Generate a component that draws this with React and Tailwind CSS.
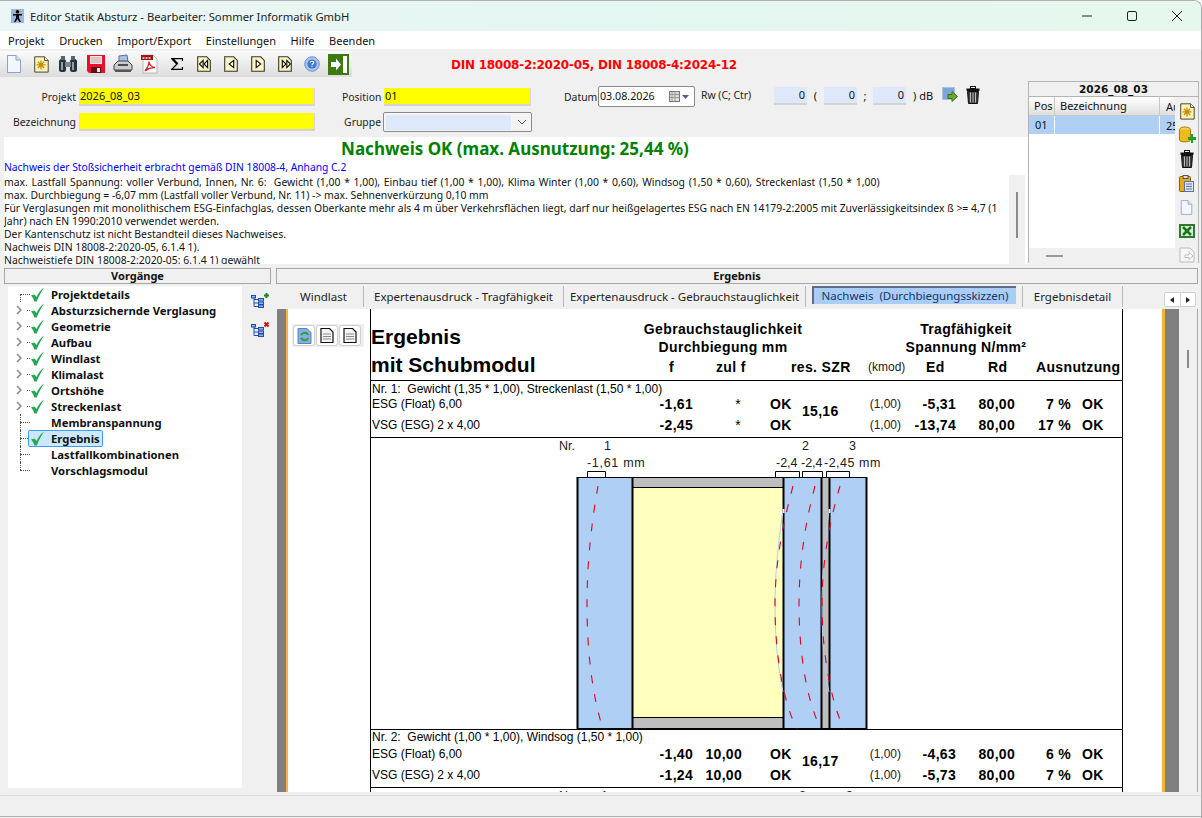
import React from "react";

const Svg = ({ w = 20, h = 20, vb, children, className = "" }) => (
  <svg width={w} height={h} viewBox={vb || `0 0 ${w} ${h}`} className={"shrink-0 " + className}>{children}</svg>
);

const DocIcon = ({ w = 16, h = 20 }) => (
  <Svg w={w} h={h} vb="0 0 16 20">
    <path d="M1.500 1.500H10L14.500 6V18.500H1.500Z" fill="#f3f6fd" stroke="#8f9fc8" />
    <path d="M10 1.500V6H14.500" fill="#dbe3f6" stroke="#8f9fc8" />
  </Svg>
);
const NewIcon = () => (
  <Svg w={18} h={18} vb="0 0 20 20">
    <path d="M3 2H14L18 6V19H3Z" fill="#fbf3bb" stroke="#3a3a1a" />
    <path d="M14 2V6H18" fill="#fff" stroke="#3a3a1a" />
    <path d="M10 6V16M5 11H15M6.500 7.500L13.500 14.500M13.500 7.500L6.500 14.500" stroke="#c88a00" strokeWidth="1.400" />
  </Svg>
);
const Binoc = () => (
  <Svg w={20} h={20}>
    <rect x="1" y="5" width="7" height="13" rx="2.500" fill="#26323c" />
    <rect x="12" y="5" width="7" height="13" rx="2.500" fill="#26323c" />
    <rect x="3" y="2" width="4" height="4" fill="#566470" />
    <rect x="13" y="2" width="4" height="4" fill="#566470" />
    <rect x="7" y="8" width="6" height="5" fill="#7a8792" />
    <rect x="3" y="8" width="2" height="8" fill="#8fa0ad" />
    <rect x="14" y="8" width="2" height="8" fill="#8fa0ad" />
  </Svg>
);
const Floppy = () => (
  <Svg w={18} h={18}>
    <path d="M0 0H18V18H2L0 16Z" fill="#e8102a" />
    <rect x="3" y="1" width="12" height="8" fill="#f4e6e6" />
    <path d="M4 3H14M4 5H14M4 7H14" stroke="#c9a0a0" />
    <rect x="4" y="12" width="10" height="6" fill="#60101a" />
    <rect x="10" y="13" width="3" height="4" fill="#e8e8e8" />
  </Svg>
);
const Printer = () => (
  <Svg w={20} h={20}>
    <path d="M6 2L14 1L15 8H6Z" fill="#a9c4ea" stroke="#57708f" />
    <path d="M1 11L5 7H15L19 11V16H1Z" fill="#c8ccd0" stroke="#444" />
    <path d="M2 16H18V18H2Z" fill="#555" />
    <path d="M5 11H15" stroke="#222" strokeWidth="1.500" />
  </Svg>
);
const Pdf = () => (
  <Svg w={17} h={20}>
    <path d="M2 1H12L16 5V19H2Z" fill="#fff" stroke="#b8b8b8" />
    <rect x="0" y="1" width="12" height="5" fill="#a31515" />
    <path d="M1.500 4H10.500" stroke="#f2dada" strokeDasharray="2 1" strokeWidth="1.500" />
    <path d="M4 17C7 13 8 10 8 7.500C8.500 11 10 13 14 13.500C10 13.500 7 14.500 4 17Z" fill="none" stroke="#e02020" strokeWidth="1.300" />
  </Svg>
);
const Sigma = () => (
  <Svg w={12} h={12}>
    <path d="M11.500 3V0.700H0.800L6 6L0.800 11.300H11.500V9" fill="none" stroke="#000" strokeWidth="1.200" />
    <path d="M1.500 0.700L6.500 6" stroke="#000" strokeWidth="2" />
  </Svg>
);
const Page = ({ kind }) => {
  const tri = {
    first: ["M8 6L4 10L8 14Z", "M13 6L9 10L13 14Z"],
    prev: ["M12 6L7 10L12 14Z"],
    next: ["M7 6L12 10L7 14Z"],
    last: ["M6 6L10 10L6 14Z", "M11 6L15 10L11 14Z"],
  }[kind];
  return (
    <Svg w={18} h={18} vb="0 0 18 20">
      <path d="M2 2H12L16 6V18H2Z" fill="#fbf5c0" stroke="#333" strokeWidth="1.200" />
      {tri.map((d, i) => (
        <path key={i} d={d} fill="#fff" stroke="#111" strokeWidth="1.300" />
      ))}
    </Svg>
  );
};
const Help = () => (
  <Svg w={16} h={16}>
    <circle cx="8" cy="8" r="7.300" fill="#a8c4ee" stroke="#6d94d4" />
    <circle cx="8" cy="8" r="4.600" fill="#3f78cf" />
    <path d="M6.300 6.500C6.500 4.800 9.800 4.800 9.800 6.600C9.800 7.800 8 7.800 8 9.200M8 10.200V11" stroke="#fff" fill="none" strokeWidth="1.200" />
  </Svg>
);
const ExitIcon = () => (
  <Svg w={21} h={21}>
    <rect width="21" height="21" fill="#3d7a12" />
    <rect x="15" y="2" width="4" height="17" fill="#fff" />
    <path d="M3 8H8V4.500L13 10.500L8 16.500V13H3Z" fill="#fff" />
  </Svg>
);
const Trash = ({ className = "" }) => (
  <Svg w={14} h={18} className={className}>
    <rect x="4.500" y="0.500" width="5" height="2" fill="none" stroke="#111" />
    <rect x="0.500" y="2.500" width="13" height="2.500" fill="#111" />
    <path d="M1.500 5.500H12.500L11.500 17.500H2.500Z" fill="#3a3a3a" stroke="#111" />
    <path d="M4.500 6.500V16.500M7 6.500V16.500M9.500 6.500V16.500" stroke="#bbb" />
  </Svg>
);
const GoIcon = () => (
  <Svg w={16} h={16}>
    <rect x="0.500" y="0.500" width="12" height="12" fill="#7ba6dc" stroke="#a7c0e2" />
    <path d="M6 7.500H10V4.500L15.500 9.500L10 14.500V11.500H6Z" fill="#6aa72f" stroke="#3e7214" />
  </Svg>
);

const Check = () => (
  <Svg w={15} h={15}>
    <path d="M1 8.500L4.500 7.500L6.500 10C8 6.500 10.500 3 14 0.500C11.500 4.500 8.500 9.500 6.800 14.500L4.500 14.500C3.800 12 2.500 10 1 8.500Z" fill="#22a84f" />
  </Svg>
);

const TreeIcon = ({ add }) => (
  <Svg w={18} h={16}>
    <g fill="#8fb4ea" stroke="#1f4fae">
      <rect x="0.500" y="3.500" width="4" height="2.500" />
      <rect x="7.500" y="6.500" width="5" height="2.500" />
      <rect x="7.500" y="10" width="5" height="2.500" />
      <rect x="7.500" y="13" width="5" height="2.500" />
    </g>
    <path d="M3 6V14.500H7.500M3 7.500H7.500M3 11H7.500" stroke="#1f4fae" fill="none" />
    {add ? (
      <path d="M13 3.500H18M15.500 1V6" stroke="#198a22" strokeWidth="2" />
    ) : (
      <path d="M13.500 1.500L17.500 5.500M17.500 1.500L13.500 5.500" stroke="#c41616" strokeWidth="2" />
    )}
  </Svg>
);

const treeItems = [
  ["Projektdetails", "first", true],
  ["Absturzsichernde Verglasung", "exp", true],
  ["Geometrie", "exp", true],
  ["Aufbau", "exp", true],
  ["Windlast", "exp", true],
  ["Klimalast", "exp", true],
  ["Ortshöhe", "exp", true],
  ["Streckenlast", "exp", true],
  ["Membranspannung", "line", false],
  ["Ergebnis", "line", true, true],
  ["Lastfallkombinationen", "line", false],
  ["Vorschlagsmodul", "last", false],
];

const TreeRow = ({ label, kind, check, sel }) => (
  <div className="h-4 flex items-center pl-[8px]">
    <div className="w-[12px] h-4 shrink-0 flex items-center">
      {kind === "exp" ? (
        <svg width="6" height="10"><path d="M1 1L5 5L1 9" fill="none" stroke="#8a8a8a" strokeWidth="1.500" /></svg>
      ) : (
        <div className={"ml-[4px] border-l border-dotted border-[#555] " + (kind === "first" ? "h-2 mt-2" : kind === "last" ? "h-2 mb-2" : "h-4")} />
      )}
    </div>
    <div className={"border-t border-dotted border-[#555] shrink-0 -mr-[1px] " + (kind === "exp" ? "w-[3px] -ml-[1px]" : "w-[10px] -ml-[8px]")} />
    <div className={"flex items-center h-[15px] rounded-[1px] pr-[2px] " + (sel ? "bg-[#cce8ff] outline outline-[#3f9cf0]" : "")}>
      <div className="w-[22px] shrink-0 pl-[1px]">{check && <Check />}</div>
      <span className="text-[11.300px] font-bold text-[#111]">{label}</span>
    </div>
  </div>
);

const Field = ({ label, lw, w, value, ml = "ml-[3px]" }) => (
  <div className="flex items-center h-5">
    <span className="text-right text-[#222] text-[10.400px]" style={{ width: lw }}>{label}</span>
    <div className={`${ml} h-[18px] bg-[#ffff00] border-b-2 border-r border-[#d4d4d4] pl-[1px] leading-[16px] text-[#111]`} style={{ width: w }}>{value}</div>
  </div>
);

const Tab = ({ label, w, className = "" }) => (
  <div className={"flex items-center shrink-0 h-[21px] justify-center border-r border-[#b9b9b9] text-[11.500px] text-[#222] " + className} style={{ width: w }}>
    {label}
  </div>
);

const Cols = ({ name, f, zul, ok1, ed, rd, pct, ok2 }) => (
  <div className="flex h-[21px] items-center font-bold text-[14px] tracking-[0.3px]">
    <div className="w-[268px] shrink-0 font-normal text-[12px] tracking-normal whitespace-nowrap">{name}</div>
    <div className="w-[53px] shrink-0 text-right">{f}</div>
    <div className={"w-[49px] shrink-0 text-right " + (zul === "*" ? "font-normal pr-[1px]" : "")}>{zul}</div>
    <div className="w-[60px] shrink-0 pl-[28px]">{ok1}</div>
    <div className="w-[99px] shrink-0 text-right font-normal text-[12px] tracking-normal text-[#222]">(1,00)</div>
    <div className="w-[55px] shrink-0 text-right">{ed}</div>
    <div className="w-[59px] shrink-0 text-right">{rd}</div>
    <div className="w-[56px] shrink-0 text-right">{pct}</div>
    <div className="w-[40px] shrink-0 pl-[11px]">{ok2}</div>
  </div>
);

const LoadRow = ({ title, a, b, szr, h, second }) => (
  <div className="border-b border-black relative" style={{ height: h }}>
    <div className={"h-[15px] text-[12px] leading-[15px] pl-[1px] whitespace-pre " + (second ? "" : "pt-[1px]")}>{title}</div>
    <div className={"pl-[1px] " + (second ? "-mt-[1px]" : "-mt-[2px]")}>
      <Cols {...a} />
      <Cols {...b} />
    </div>
    <div className={"absolute left-[431px] font-bold text-[14px] tracking-[0.3px] " + (second ? "top-[25px]" : "top-[24px]")}>{szr}</div>
  </div>
);

const Curve = ({ d }) => <path d={d} fill="none" stroke="#e8001a" strokeWidth="1.100" strokeDasharray="8 11" />;

const Diagram = () => (
  <svg width="752" height="291" viewBox="371 438 752 291" className="block" style={{ fontFamily: "'Liberation Sans',sans-serif" }}>
    <g fontSize="12.500" fill="#222">
      <text x="559" y="450">Nr.</text>
      <text x="604" y="450">1</text>
      <text x="802" y="450">2</text>
      <text x="849" y="450">3</text>
      <text x="587" y="467" letterSpacing="0.700">-1,61 mm</text>
      <text x="776" y="467">-2,4</text>
      <text x="801" y="467">-2,4</text>
      <text x="824" y="467" letterSpacing="0.500">-2,45 mm</text>
    </g>
    <g fill="none" stroke="#000">
      <path d="M587.500 477V471.500H605.500V477" />
      <path d="M775.500 477V471.500H799.500V477" />
      <path d="M802.500 477V471.500H822.500V477" />
      <path d="M826.500 477V471.500H849.500V477" />
    </g>
    <rect x="577" y="477" width="56" height="252" fill="#afcff5" />
    <rect x="633" y="478" width="150" height="9" fill="#bebebe" />
    <rect x="633" y="488" width="150" height="229" fill="#ffffbe" />
    <rect x="633" y="718" width="150" height="10" fill="#bebebe" />
    <rect x="784" y="477" width="37" height="252" fill="#afcff5" />
    <rect x="822" y="477" width="7" height="252" fill="#bebebe" />
    <rect x="830" y="477" width="37" height="252" fill="#afcff5" />
    <g stroke="#000" fill="none">
      <path d="M577 477.500H867M577 728.500H867" />
      <path d="M633 487.500H783M633 717.500H783" />
      <path d="M577.500 477V729M632.500 477V729M783.500 477V729M821.500 477V729M829.500 477V729M866.500 477V729" strokeWidth="2" />
    </g>
    <rect x="782.500" y="509" width="2" height="4" fill="#eaf2fb" />
    <rect x="828.500" y="509" width="2" height="4" fill="#eaf2fb" />
    <path d="M783 511C777 550 775 580 775 605C775 640 778 668 783 692" fill="none" stroke="#aecdf2" />
    <path d="M829 511C824 550 822 580 822 605C822 640 824 668 829 692" fill="none" stroke="#aecdf2" />
    <Curve d="M598 486C592 520 587 560 587 605C587 650 592 695 603 729" />
    <Curve d="M793 486C784 520 775 560 775 605C775 650 782 700 797 729" />
    <Curve d="M815 486C806 520 799 560 799 605C799 650 806 700 821 729" />
    <Curve d="M840 486C830 520 822 560 822 605C822 650 830 700 844 729" />
  </svg>
);

const Report = () => (
  <div className="w-[753px] shrink-0 bg-white border-l border-r border-black font-['Liberation_Sans',sans-serif] text-black">
    <div className="h-[72px] flex border-b border-black">
      <div className="w-[268px] shrink-0 pt-[14px] font-bold text-[21px] leading-[28px] whitespace-nowrap">
        <div>Ergebnis</div>
        <div>mit Schubmodul</div>
      </div>
      <div className="flex-1 font-bold text-[14px] tracking-[0.35px]">
        <div className="flex h-[42px] pt-[11px] leading-[18px]">
          <div className="w-[170px] -ml-[1px] mr-[1px] text-center">Gebrauchstauglichkeit<br />Durchbiegung mm</div>
          <div className="w-[150px] ml-[82px] text-center">Tragfähigkeit<br />Spannung N/mm²</div>
        </div>
        <div className="flex pt-[8px] leading-[16px] whitespace-nowrap">
          <div className="w-[27px] ml-[19px] text-center">f</div>
          <div className="ml-[31px] w-[75px]">zul f</div>
          <div className="w-[77px]">res. SZR</div>
          <div className="text-[12px] font-normal tracking-normal text-[#222] w-[58px]">(kmod)</div>
          <div className="w-[62px]">Ed</div>
          <div className="w-[48px]">Rd</div>
          <div>Ausnutzung</div>
        </div>
      </div>
    </div>
    <LoadRow
      h={57}
      title="Nr. 1:  Gewicht (1,35 * 1,00), Streckenlast (1,50 * 1,00)"
      szr="15,16"
      a={{ name: "ESG (Float) 6,00", f: "-1,61", zul: "*", ok1: "OK", ed: "-5,31", rd: "80,00", pct: "7 %", ok2: "OK" }}
      b={{ name: "VSG (ESG) 2 x 4,00", f: "-2,45", zul: "*", ok1: "OK", ed: "-13,74", rd: "80,00", pct: "17 %", ok2: "OK" }}
    />
    <Diagram />
    <div className="border-t border-black">
      <LoadRow
        h={58}
        second
        title="Nr. 2:  Gewicht (1,00 * 1,00), Windsog (1,50 * 1,00)"
        szr="16,17"
        a={{ name: "ESG (Float) 6,00", f: "-1,40", zul: "10,00", ok1: "OK", ed: "-4,63", rd: "80,00", pct: "6 %", ok2: "OK" }}
        b={{ name: "VSG (ESG) 2 x 4,00", f: "-1,24", zul: "10,00", ok1: "OK", ed: "-5,73", rd: "80,00", pct: "7 %", ok2: "OK" }}
      />
    </div>
    <div className="flex text-[12.500px] leading-[15px] pt-[1px] text-[#222]">
      <span className="ml-[188px]">Nr.</span>
      <span className="ml-[26px]">1</span>
      <span className="ml-[191px]">2</span>
      <span className="ml-[40px]">3</span>
    </div>
  </div>
);

const SideIcon = ({ children }) => <div className="h-6 shrink-0 flex items-center justify-center">{children}</div>;

export default function App() {
  return (
    <div className="w-[1202px] h-[818px] overflow-hidden flex flex-col bg-[#f0f0f0] border-t border-r border-[#b0b0b0] rounded-tr-[8px] font-['Noto_Sans',sans-serif] text-[11px] leading-[13px] text-[#111]">
      {/* title */}
      <div className="h-[30px] shrink-0 flex items-center bg-gradient-to-r from-[#ecf6f6] via-[#e4f6f1] to-[#e6f7ed] pl-[11px]">
        <Svg w={13} h={14} className="-mt-[1px]">
          <rect width="13" height="14" fill="#9db8dc" />
          <path d="M6.500 1A1.800 1.800 0 1 1 6.490 1ZM2 5H11V6.500H8V9L10 13H8.500L6.500 10L4.500 13H3L5 9V6.500H2Z" fill="#000" />
        </Svg>
        <span className="ml-[6px] text-[11.250px] text-[#222] whitespace-nowrap">Editor Statik Absturz - Bearbeiter: Sommer Informatik GmbH</span>
        <div className="ml-auto flex items-center mr-[19px] gap-[35px]">
          <Svg w={10} h={10}><path d="M0 5H10" stroke="#222" /></Svg>
          <Svg w={10} h={10}><rect x="0.500" y="0.500" width="9" height="9" rx="1.500" fill="none" stroke="#222" /></Svg>
          <Svg w={10} h={10}><path d="M0 0L10 10M10 0L0 10" stroke="#222" /></Svg>
        </div>
      </div>
      {/* menu */}
      <div className="h-[18px] shrink-0 bg-white flex items-center pl-[8px] gap-[14.600px] text-[11px] text-[#111]">
        {["Projekt", "Drucken", "Import/Export", "Einstellungen", "Hilfe", "Beenden"].map((m) => <span key={m}>{m}</span>)}
      </div>
      {/* toolbar */}
      <div className="h-[28px] shrink-0 flex items-center">
        <div className="h-[26px] w-[352px] bg-gradient-to-b from-[#fbfbfb] to-[#dcdcdc] mt-[2px] flex items-center">
          <div className="w-[27px] flex justify-center"><DocIcon /></div>
          <div className="w-[27px] flex justify-center"><NewIcon /></div>
          <div className="w-[28px] flex justify-center"><Binoc /></div>
          <div className="w-[27px] flex justify-center"><Floppy /></div>
          <div className="w-[27px] flex justify-center"><Printer /></div>
          <div className="w-[27px] flex justify-center"><Pdf /></div>
          <div className="w-[27px] flex justify-center"><Sigma /></div>
          <div className="w-[27px] flex justify-center"><Page kind="first" /></div>
          <div className="w-[27px] flex justify-center"><Page kind="prev" /></div>
          <div className="w-[27px] flex justify-center"><Page kind="next" /></div>
          <div className="w-[27px] flex justify-center"><Page kind="last" /></div>
          <div className="w-[27px] flex justify-center"><Help /></div>
          <div className="w-[27px] flex justify-center"><ExitIcon /></div>
        </div>
        <div className="ml-[99px] mt-[4px] font-bold text-[#ff0000] text-[12px] whitespace-nowrap font-['DejaVu_Sans',sans-serif] tracking-[-0.25px]">DIN 18008-2:2020-05, DIN 18008-4:2024-12</div>
      </div>
      {/* top region */}
      <div className="h-[187px] shrink-0 flex">
        <div className="w-[1028px] shrink-0 flex flex-col">
          {/* form */}
          <div className="h-[60px] shrink-0 flex pt-[10px]">
            <div className="w-[342px] shrink-0 flex flex-col gap-[5px]">
              <Field label="Projekt" lw={76} w={236} value="2026_08_03" />
              <Field label="Bezeichnung" lw={76} w={236} value="" />
            </div>
            <div className="w-[222px] shrink-0 flex flex-col gap-[5px]">
              <Field label="Position" lw={39} w={147} value="01" />
              <div className="flex items-center h-5">
                <span className="w-[39px] text-right text-[#222] text-[10.400px]">Gruppe</span>
                <div className="ml-[2px] w-[149px] h-[20px] border border-[#8a8a8a] rounded-[2px] bg-[#f4f4f4] flex items-center p-[2px]">
                  <div className="w-[125px] h-[15px] bg-[#dde8fa]" />
                  <svg width="10" height="6" className="ml-[6px]"><path d="M1 1L5 5L9 1" fill="none" stroke="#555" /></svg>
                </div>
              </div>
            </div>
            <div className="flex items-start">
              <span className="mt-[4px] text-[#222] text-[10.400px] w-[31px] whitespace-nowrap">Datum</span>
              <div className="ml-[3px] w-[97px] h-[21px] border border-[#8a8a8a] rounded-[2px] bg-white flex items-center pl-[1px] -mt-[1px]">
                <span className="text-[10.700px]">03.08.2026</span>
                <Svg w={11} h={11} className="ml-[14px]">
                  <rect x="0.500" y="0.500" width="10" height="10" fill="#ddd" stroke="#777" />
                  <path d="M3 1V10M6 1V10M1 3.500H10M1 6.500H10" stroke="#999" />
                </Svg>
                <svg width="7" height="4" className="ml-[2px]"><path d="M0 0H7L3.500 4Z" fill="#4d6488" /></svg>
              </div>
              <span className="ml-[6px] mt-[2px] text-[#222] text-[10.400px] w-[55px] whitespace-nowrap">Rw (C; Ctr)</span>
              {[0, 1, 2].map((i) => (
                <React.Fragment key={i}>
                  <div className={"h-[18px] w-[33px] bg-[#dde8fa] border-b-2 border-[#d4d4d4] text-right pr-[2px] leading-[16px] " + (i === 0 ? "ml-[18px]" : "")}>0</div>
                  {i === 0 && <span className="w-[17px] text-center mt-[2px]">(</span>}
                  {i === 1 && <span className="w-[16px] text-center mt-[2px]">;</span>}
                </React.Fragment>
              ))}
              <span className="ml-[7px] mt-[2px] w-[18px] whitespace-nowrap">) dB</span>
              <div className="ml-[11px]"><GoIcon /></div>
              <Trash className="ml-[8px] -mt-[1px]" />
            </div>
          </div>
          {/* result */}
          <div className="h-[127px] shrink-0 ml-[4px] bg-white flex overflow-hidden">
            <div className="flex-1 overflow-hidden">
              <div className="h-[23px] pl-[17px] pt-[1px] text-center font-bold text-[#008000] text-[17px] leading-[21px] whitespace-nowrap">Nachweis OK (max. Ausnutzung: 25,44 %)</div>
              <div className="text-[#0000ff] mt-[1px] h-[15px] text-[10.300px] leading-[13px] whitespace-nowrap">Nachweis der Stoßsicherheit erbracht gemäß DIN 18008-4, Anhang C.2</div>
              <div className="text-[#111] text-[10.400px]">
                <div className="whitespace-pre [word-spacing:1px]">max. Lastfall Spannung: voller Verbund, Innen, Nr. 6:  Gewicht (1,00 * 1,00), Einbau tief (1,00 * 1,00), Klima Winter (1,00 * 0,60), Windsog (1,50 * 0,60), Streckenlast (1,50 * 1,00)</div>
                <div className="whitespace-nowrap">max. Durchbiegung = -6,07 mm (Lastfall voller Verbund, Nr. 11) -&gt; max. Sehnenverkürzung 0,10 mm</div>
                <div className="whitespace-nowrap">Für Verglasungen mit monolithischem ESG-Einfachglas, dessen Oberkante mehr als 4 m über Verkehrsflächen liegt, darf nur heißgelagertes ESG nach EN 14179-2:2005 mit Zuverlässigkeitsindex ß &gt;= 4,7 (1</div>
                <div>Jahr) nach EN 1990:2010 verwendet werden.</div>
                <div>Der Kantenschutz ist nicht Bestandteil dieses Nachweises.</div>
                <div>Nachweis DIN 18008-2:2020-05, 6.1.4 1).</div>
                <div>Nachweistiefe DIN 18008-2:2020-05: 6.1.4 1) gewählt</div>
              </div>
            </div>
            <div className="w-[16px] shrink-0 self-end h-[89px] mr-[3px] bg-[#f0f0f0] flex justify-center pt-[17px]">
              <div className="w-[2px] h-[46px] bg-[#8a8a8a]" />
            </div>
          </div>
        </div>
        {/* right list */}
        <div className="w-[171px] shrink-0 mt-[4px] mb-[1px] border-l border-t border-r border-[#b4b4b4] flex flex-col">
          <div className="h-[15px] shrink-0 border-b border-[#b4b4b4] text-center font-bold leading-[15px] font-['DejaVu_Sans',sans-serif] text-[10.500px]">2026_08_03</div>
          <div className="flex-1 flex min-h-0">
            <div className="w-[146px] shrink-0 flex flex-col overflow-hidden">
              <div className="h-[19px] shrink-0 bg-gradient-to-b from-[#ffffff] to-[#dfdfdf] flex border-b border-[#c8c8c8] items-center whitespace-nowrap">
                <span className="w-[26px] shrink-0 pl-[5px] border-r border-[#c8c8c8] h-full leading-[18px]">Pos</span>
                <span className="w-[105px] shrink-0 pl-[5px] border-r border-[#c8c8c8] h-full leading-[18px]">Bezeichnung</span>
                <span className="pl-[6px] w-[15px] shrink-0 overflow-hidden">Aus</span>
              </div>
              <div className="h-[19px] shrink-0 bg-[#afcff5] flex items-center border-b border-white whitespace-nowrap">
                <span className="w-[26px] shrink-0 pl-[6px] border-r border-white h-full leading-[18px]">01</span>
                <span className="w-[105px] shrink-0 border-r border-white h-full" />
                <span className="pl-[6px] w-[15px] shrink-0 overflow-hidden">25,44</span>
              </div>
              <div className="h-[113px] shrink-0 bg-white" />
              <div className="flex-1 bg-[#f0f0f0] flex items-center pl-[17px]"><div className="w-[17px] h-[2px] bg-[#9a9a9a]" /></div>
            </div>
            <div className="flex-1 flex flex-col items-center pt-[2px] overflow-hidden">
              <SideIcon><NewIcon /></SideIcon>
              <SideIcon>
                <Svg w={18} h={18}>
                  <ellipse cx="7" cy="3.500" rx="5.500" ry="2.500" fill="#f7d648" stroke="#a67c00" />
                  <path d="M1.500 3.500V14C1.500 16.500 12.500 16.500 12.500 14V3.500" fill="#eabc1e" stroke="#a67c00" />
                  <path d="M13 8V11H10V14H13V17H15V14H18V11H15V8Z" fill="#1e9e2a" />
                </Svg>
              </SideIcon>
              <SideIcon><Trash /></SideIcon>
              <SideIcon>
                <Svg w={15} h={17}>
                  <rect x="0.500" y="1.500" width="11" height="15" rx="1" fill="#e8a820" stroke="#8a5f00" />
                  <rect x="4" y="0.500" width="5" height="3" fill="#ddd" stroke="#555" />
                  <rect x="5.500" y="6.500" width="9" height="10" fill="#dfe6f7" stroke="#5a6ea8" />
                  <path d="M7 9H13M7 11.500H13M7 14H13" stroke="#5a6ea8" />
                </Svg>
              </SideIcon>
              <SideIcon><DocIcon w={13} h={17} /></SideIcon>
              <SideIcon>
                <Svg w={16} h={14}>
                  <rect width="16" height="14" fill="#2d7a2d" />
                  <rect x="2" y="2" width="12" height="10" fill="#dce9dc" />
                  <path d="M4 3L12 11M12 3L4 11" stroke="#177a17" strokeWidth="2.500" />
                </Svg>
              </SideIcon>
              <SideIcon>
                <Svg w={16} h={16}>
                  <path d="M1 1H11L15 5V15H1Z" fill="#f6f6f6" stroke="#bdbdbd" />
                  <path d="M6 8H10V5.500L14 9L10 12.500V10.500H6Z" fill="#fff" stroke="#bdbdbd" />
                </Svg>
              </SideIcon>
            </div>
          </div>
        </div>
      </div>
      {/* bottom region */}
      <div className="flex-1 min-h-0 flex pt-[4px]">
        {/* Vorgänge */}
        <div className="w-[267px] shrink-0 ml-[4px] flex flex-col">
          <div className="h-[16px] shrink-0 border border-[#a6a6a6] text-center font-bold leading-[14px] text-[11px]">Vorgänge</div>
          <div className="flex-1 flex pt-[2px] pl-[4px] pb-[4px]">
            <div className="w-[234px] bg-white">
              {treeItems.map(([l, k, c, s]) => <TreeRow key={l} label={l} kind={k} check={c} sel={s} />)}
            </div>
            <div className="ml-[9px] pt-[6px] flex flex-col gap-[13px]">
              <TreeIcon add />
              <TreeIcon />
            </div>
          </div>
        </div>
        {/* Ergebnis */}
        <div className="w-[922px] shrink-0 ml-[5px] flex flex-col">
          <div className="h-[16px] shrink-0 border border-[#a6a6a6] text-center font-bold leading-[14px] text-[11px]">Ergebnis</div>
          <div className="h-[25px] shrink-0 flex items-start pt-[2px]">
            <Tab label="Windlast" w={88} className="pl-[8px]" />
            <Tab label="Expertenausdruck - Tragfähigkeit" w={200} />
            <Tab label="Expertenausdruck - Gebrauchstauglichkeit" w={242} />
            <div className="w-[217px] shrink-0 flex justify-center h-[21px] border-r border-[#b9b9b9]"><div className="h-[18px] w-[204px] bg-[#a9cdf5] border-l-2 border-t-2 border-[#5c6f88] leading-[15px] text-center text-[#17346b] text-[11.500px] whitespace-pre">Nachweis  (Durchbiegungsskizzen)</div></div>
            <Tab label="Ergebnisdetail" w={100} />
            <div className="ml-[41px] mt-[6px] h-[15px] w-[32px] border border-[#d0d0d0] rounded-[2px] bg-white flex items-center">
              <div className="flex-1 flex justify-center border-r border-[#d0d0d0] h-full items-center"><svg width="4" height="6"><path d="M4 0V6L0 3Z" fill="#222" /></svg></div>
              <div className="flex-1 flex justify-center items-center"><svg width="4" height="6"><path d="M0 0V6L4 3Z" fill="#222" /></svg></div>
            </div>
          </div>
          <div className="flex-1 min-h-0 flex overflow-hidden border-r border-[#a6a6a6]">
            <div className="w-[9px] ml-[1px] shrink-0 bg-[#808080]" />
            <div className="w-[2px] shrink-0 bg-[#f7b52f]" />
            <div className="w-[82px] shrink-0 bg-white pt-[15px] pl-[4px]">
              <div className="w-[72px] h-[23px] bg-[#efefef] flex items-center gap-[1px] pl-[1px]">
                <div className="w-[22px] h-[21px] border border-[#cfcfcf] rounded-[3px] bg-white flex items-center justify-center">
                  <Svg w={15} h={16}>
                    <path d="M1 0.500H10L14 4.500V15.500H1Z" fill="#7fb0e6" stroke="#5b84b8" />
                    <path d="M4 7C6 4 10 4 11 7M11 10C10 13 6 13 4 10" stroke="#3f9a2c" strokeWidth="2" fill="none" />
                  </Svg>
                </div>
                {[0, 1].map((i) => (
                  <div key={i} className="w-[22px] h-[21px] border border-[#cfcfcf] rounded-[3px] bg-white flex items-center justify-center">
                    <Svg w={14} h={15}>
                      <path d="M1 0.500H9.500L13 4V14.500H1Z" fill="#f5f5f5" stroke="#111" strokeWidth="1.200" />
                      <path d="M3 6H11M3 8.500H11M3 11H11" stroke="#888" />
                    </Svg>
                  </div>
                ))}
              </div>
            </div>
            <Report />
            <div className="w-[39px] shrink-0 bg-white" />
            <div className="w-[3px] shrink-0 bg-[#f7b52f]" />
            <div className="w-[14px] shrink-0 bg-[#808080]" />
            <div className="flex-1 bg-[#f0f0f0] flex justify-center pt-[41px]"><div className="w-[2px] h-[18px] bg-[#8a8a8a]" /></div>
          </div>
        </div>
      </div>
      {/* status */}
      <div className="h-[26px] shrink-0 pt-[3px] bg-[#f0f0f0]">
        <div className="h-[22px] border-t border-b border-t-[#dcdcdc] border-b-[#b0b0b0]" />
      </div>
    </div>
  );
}
